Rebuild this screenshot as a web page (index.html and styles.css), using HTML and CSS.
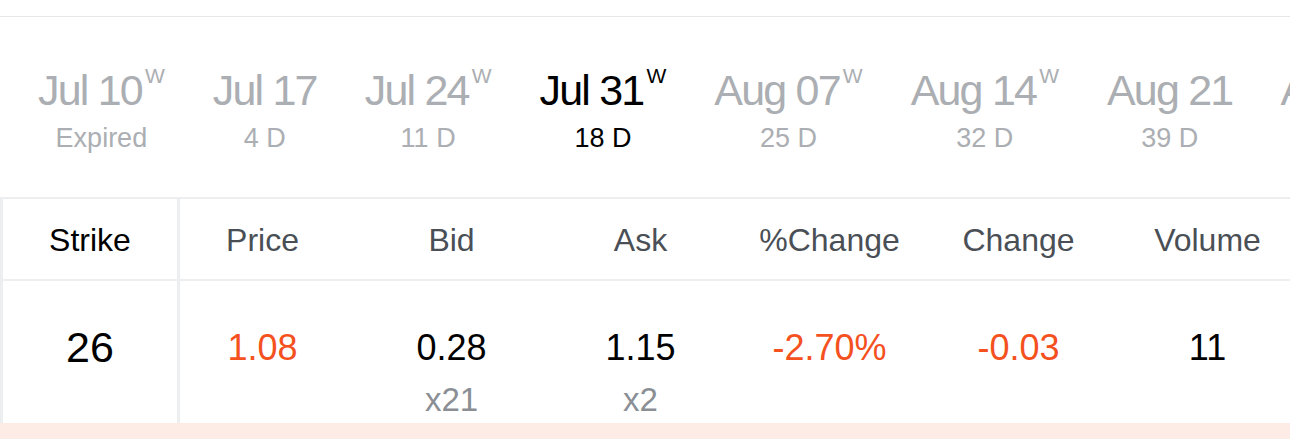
FILE: index.html
```html
<!DOCTYPE html>
<html lang="en">

<head>
    <meta charset="UTF-8">
    <meta name="viewport" content="width=device-width, initial-scale=1.0">
    <title>Option Chain</title>
    <link rel="stylesheet" href="styles.css">
</head>

<body>
    <div class="top-rule"></div>

    <div class="expiries">
        <div class="expiry">
            <div class="expiry-date">Jul 10<sup class="weekly">W</sup></div>
            <div class="expiry-days">Expired</div>
        </div>
        <div class="expiry">
            <div class="expiry-date">Jul 17</div>
            <div class="expiry-days">4 D</div>
        </div>
        <div class="expiry">
            <div class="expiry-date">Jul 24<sup class="weekly">W</sup></div>
            <div class="expiry-days">11 D</div>
        </div>
        <div class="expiry active">
            <div class="expiry-date">Jul 31<sup class="weekly">W</sup></div>
            <div class="expiry-days">18 D</div>
        </div>
        <div class="expiry">
            <div class="expiry-date">Aug 07<sup class="weekly">W</sup></div>
            <div class="expiry-days">25 D</div>
        </div>
        <div class="expiry">
            <div class="expiry-date">Aug 14<sup class="weekly">W</sup></div>
            <div class="expiry-days">32 D</div>
        </div>
        <div class="expiry">
            <div class="expiry-date">Aug 21</div>
            <div class="expiry-days">39 D</div>
        </div>
        <div class="expiry">
            <div class="expiry-date">Aug 28<sup class="weekly">W</sup></div>
            <div class="expiry-days">46 D</div>
        </div>
    </div>

    <div class="chain">
        <div class="fixed-col">
            <div class="head-cell strike-head">Strike</div>
            <div class="data-cell strike-value">26</div>
        </div>
        <div class="scroll-cols">
            <div class="scroll-inner">
                <div class="head-row">
                    <div class="head-cell">Price</div>
                    <div class="head-cell">Bid</div>
                    <div class="head-cell">Ask</div>
                    <div class="head-cell">%Change</div>
                    <div class="head-cell">Change</div>
                    <div class="head-cell">Volume</div>
                </div>
                <div class="data-row">
                    <div class="data-cell down">1.08</div>
                    <div class="data-cell">
                        <span>0.28</span>
                        <span class="size">x21</span>
                    </div>
                    <div class="data-cell">
                        <span>1.15</span>
                        <span class="size">x2</span>
                    </div>
                    <div class="data-cell down">-2.70%</div>
                    <div class="data-cell down">-0.03</div>
                    <div class="data-cell">11</div>
                </div>
            </div>
        </div>
    </div>

    <div class="highlight-row"></div>
</body>

</html>
```

FILE: styles.css
```css
:root {
    --text-color: #000000;
    --muted-color: #abaeb2;
    --head-color: #4a4f56;
    --size-color: #8b8f95;
    --down-color: #f4511e;
    --line-color: #eceef0;
    --pink-bg: #fdebe5;
    --font-family: "Liberation Sans", Arial, Helvetica, sans-serif;
}

* {
    margin: 0;
    padding: 0;
    box-sizing: border-box;
}

body {
    font-family: var(--font-family);
    background: #ffffff;
    color: var(--text-color);
    width: 1290px;
    height: 439px;
    overflow: hidden;
}

.top-rule {
    height: 17px;
    border-bottom: 1px solid #e6e7e9;
}

/* expiry date strip */
.expiries {
    height: 182px;
    display: flex;
    gap: 48px;
    padding: 49px 0 0 38px;
    border-bottom: 2px solid var(--line-color);
    overflow: hidden;
    white-space: nowrap;
}

.expiry {
    display: flex;
    flex-direction: column;
    align-items: center;
    flex-shrink: 0;
    color: var(--muted-color);
}

.expiry.active {
    color: var(--text-color);
}

.expiry-date {
    font-size: 43px;
    line-height: 48px;
    letter-spacing: -1.8px;
}

.weekly {
    font-size: 21px;
    letter-spacing: 0;
    vertical-align: 22px;
    line-height: 0;
    margin-left: 3px;
}

.expiry-days {
    font-size: 27px;
    line-height: 32px;
    margin-top: 8px;
}

/* option chain table */
.chain {
    display: flex;
    border-left: 3px solid var(--line-color);
    height: 224px;
}

.fixed-col {
    width: 177px;
    flex-shrink: 0;
    border-right: 3px solid var(--line-color);
}

.scroll-cols {
    flex: 1;
    overflow: hidden;
}

.scroll-inner {
    margin-left: -12px;
}

.head-row,
.data-row {
    display: flex;
}

.head-cell {
    width: 189px;
    flex-shrink: 0;
    height: 82px;
    border-bottom: 2px solid var(--line-color);
    display: flex;
    align-items: center;
    justify-content: center;
    padding-top: 3px;
    font-size: 32px;
    color: var(--head-color);
}

.fixed-col .head-cell {
    width: auto;
    color: var(--text-color);
}

.data-cell {
    width: 189px;
    flex-shrink: 0;
    height: 142px;
    display: flex;
    flex-direction: column;
    align-items: center;
    padding-top: 47px;
    font-size: 36px;
    line-height: 40px;
}

.data-cell .size {
    font-size: 33px;
    line-height: 40px;
    margin-top: 12px;
    color: var(--size-color);
}

.strike-value {
    width: auto;
    padding-top: 42px;
    font-size: 43px;
    line-height: 48px;
}

.down {
    color: var(--down-color);
}

.highlight-row {
    height: 40px;
    background: var(--pink-bg);
}
```
